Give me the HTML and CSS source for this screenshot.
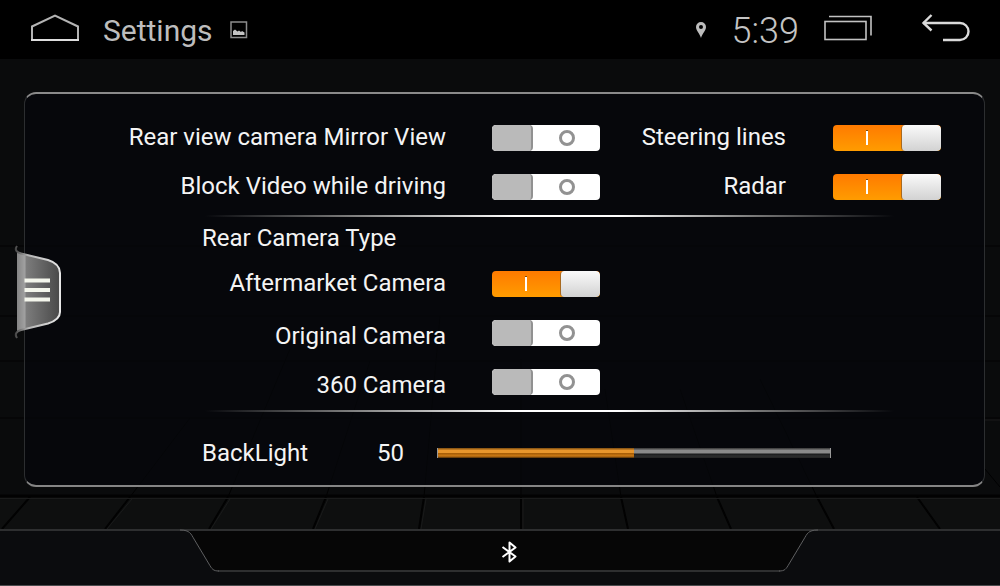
FILE: index.html
```html
<!DOCTYPE html>
<html lang="en">
<head>
  <meta charset="utf-8">
  <title>Settings</title>
  <link rel="stylesheet" href="styles.css">
</head>
<body>
  <header class="status-bar">
    <button class="icon-btn home" aria-label="Home">
      <svg width="50" height="30" viewBox="0 0 50 30" fill="none" stroke="#b4b4b4" stroke-width="2">
        <path d="M2 13.5 L25 2.5 L48 13.5 V27 H2 Z"/>
        <path d="M1 27 H49" stroke="#dedede"/>
      </svg>
    </button>
    <h1>Settings</h1>
    <svg class="picture" width="18" height="18" viewBox="0 0 18 18">
      <rect x="1" y="1" width="15.5" height="15.5" fill="none" stroke="#8c8c8c" stroke-width="1.5"/>
      <path d="M3 14 V10 L5 8.5 L7.5 10.5 L9 9.5 L11 11 L12 10 L14.5 11.5 V14 Z" fill="#c4c4c4"/>
    </svg>
    <div class="spacer"></div>
    <svg class="pin" width="12" height="18" viewBox="0 0 12 18">
      <path fill="#bcbcbc" fill-rule="evenodd" d="M6 1 a5 5 0 0 1 5 5 C11 9.500 7.500 12 6 17 C4.500 12 1 9.500 1 6 A5 5 0 0 1 6 1 Z M6 4 a2 2 0 1 0 0 4 a2 2 0 1 0 0 -4 Z"/>
    </svg>
    <time>5:39</time>
    <button class="icon-btn recent" aria-label="Recent apps">
      <svg width="50" height="28" viewBox="0 0 50 28" fill="none" stroke="#c2c2c2" stroke-width="1.600">
        <rect x="2" y="7.500" width="41" height="18"/>
        <path d="M6 2.500 H48 V21.500"/>
      </svg>
    </button>
    <button class="icon-btn back" aria-label="Back">
      <svg width="50" height="30" viewBox="0 0 50 30" fill="none" stroke="#dadada" stroke-width="2.400">
        <path d="M2 10 H39 a8.500 8.500 0 0 1 0 17 H22"/>
        <path d="M10.500 2 L2.500 10 L10.500 17.500"/>
      </svg>
    </button>
  </header>

  <main>
    <svg class="floor" viewBox="0 0 1000 470" preserveAspectRatio="none" fill="none">
      <path fill="#0e0f0f" d="M0 438 H1000 V470 H0 Z"/>
      <g stroke="#020202" stroke-width="3">
        <path d="M0 437 H1000"/>
        <path d="M0 359 H1000 M0 302 H1000 M0 257 H1000 M0 187 H1000" stroke-width="1"/>
        <path d="M30 438 L2 470 M130 438 L105 470 M228 438 L209 470 M326 438 L313 470 M424 438 L419 470 M521 438 V470 M621 438 L628 470 M717 438 L731 470 M817 438 L834 470 M917 438 L940 470" stroke-width="2"/>
        <path d="M130 438 L190 359 M228 438 L290 290 M326 438 L370 302 M424 438 L440 257 M521 438 V300 M621 438 L605 330 M717 438 L680 330 M817 438 L760 320 M985 410 L1000 428" stroke-width="1"/>
      </g>
      <path stroke="#1a1b1b" d="M0 439.500 H1000 M132 440 L107 470 M230 440 L211 470 M328 440 L315 470 M426 440 L421 470 M523 440 V470 M985 361 H1000"/>
    </svg>

    <form class="panel">
      <div class="row">
        <label for="mirror">Rear view camera Mirror View</label>
        <input type="checkbox" class="toggle" id="mirror">
        <label for="lines">Steering lines</label>
        <input type="checkbox" class="toggle" id="lines" checked>
      </div>
      <div class="row">
        <label for="block">Block Video while driving</label>
        <input type="checkbox" class="toggle" id="block">
        <label for="radar">Radar</label>
        <input type="checkbox" class="toggle" id="radar" checked>
      </div>
      <hr>
      <h2>Rear Camera Type</h2>
      <div class="row">
        <label for="aftermarket">Aftermarket Camera</label>
        <input type="checkbox" class="toggle" id="aftermarket" checked>
      </div>
      <div class="row low">
        <label for="original">Original Camera</label>
        <input type="checkbox" class="toggle" id="original">
      </div>
      <div class="row low">
        <label for="cam360">360 Camera</label>
        <input type="checkbox" class="toggle" id="cam360">
      </div>
      <hr>
      <div class="backlight">
        <label for="light">BackLight</label>
        <output for="light">50</output>
        <input type="range" id="light" min="0" max="100" value="50">
      </div>
    </form>

    <button class="drawer" aria-label="Menu">
      <svg width="48" height="96" viewBox="0 0 48 96" fill="none">
        <defs>
          <linearGradient id="metal">
            <stop offset="0" stop-color="#858585"/>
            <stop offset="0.180" stop-color="#a0a0a0"/>
            <stop offset="0.220" stop-color="#7c7c7c"/>
            <stop offset="1" stop-color="#484848"/>
          </linearGradient>
          <linearGradient id="edge" gradientUnits="userSpaceOnUse" x1="0" y1="0" x2="47" y2="0">
            <stop offset="0" stop-color="#3a3a3a"/>
            <stop offset="0.300" stop-color="#b5b5b5"/>
            <stop offset="1" stop-color="#e8e8e8"/>
          </linearGradient>
        </defs>
        <path fill="url(#metal)" d="M3 7 L34 15 C42 17.500 46 21 46 28 V67 C46 73 42 76 34 78.500 L3 86 Z"/>
        <path stroke="url(#edge)" stroke-width="2" d="M3 1 C0 5 3 7.500 7 8.500 L34 15 C42 17.500 46 21 46 28 V67 C46 73 42 76 34 78.500 L7 85 C3 86 0 89 3 93"/>
        <path stroke="#f4f6ec" stroke-width="4" d="M10.500 35.500 H36 M10.500 45 H36 M10.500 54.500 H36"/>
      </svg>
    </button>
  </main>

  <footer class="dock">
    <svg class="dock-shape" viewBox="0 0 1000 57" preserveAspectRatio="none" fill="none">
      <path fill="#060606" d="M182 1 C190 1 191 6 194 10 L209 35 C212 40 213 42 219 42 H779 C785 42 786 40 789 35 L804 10 C807 6 808 1 816 1 Z"/>
      <path stroke="#2e2f30" stroke-width="2" d="M0 1 H1000 M218 42 H780"/>
      <path stroke="#5e5f60" stroke-width="1" d="M180 1 C190 1 191 5 194 10 L209 35 C212 40 213 42 219 42 M779 42 C785 42 786 40 789 35 L804 10 C807 5 808 1 818 1"/>
      <path stroke="#4b4c4e" d="M0 56.500 H1000"/>
    </svg>
    <svg class="bluetooth" width="16" height="22" viewBox="0 0 16 22" fill="none" stroke="#fff" stroke-width="2" stroke-linejoin="round">
      <path d="M1.500 6 L14.500 15.500 L8.500 20.500 V1.500 L14.500 6.500 L1.500 16"/>
    </svg>
  </footer>
</body>
</html>
```

FILE: styles.css
```css
*, *::before, *::after {
  box-sizing: border-box;
}
body {
  margin: 0;
  min-height: 100vh;
  display: flex;
  flex-direction: column;
  background: #0a0b0c;
  color: #f4f4f4;
  font-family: Roboto, sans-serif;
  font-size: 24px;
}
h1, h2 {
  margin: 0;
  font-weight: 400;
}
button {
  padding: 0;
  border: none;
  background: none;
  cursor: pointer;
}
svg {
  display: block;
}

/* top bar */
.status-bar {
  display: flex;
  align-items: center;
  height: 59px;
  padding: 0 29px 0 30px;
  background: #000;
}
.status-bar h1 {
  margin: 2px 17px 0 23px;
  font-size: 30px;
  color: #bdbdbd;
}
.spacer {
  flex: 1;
}
time {
  margin: 2px 24px 0 25px;
  font-size: 36px;
  font-weight: 300;
  color: #c4c4c4;
}
.back {
  margin-left: 48px;
}
.icon-btn {
  padding-bottom: 4px;
}

/* settings panel */
main {
  position: relative;
  flex: 1;
  padding: 33px 15px 42px 24px;
}
.floor {
  position: absolute;
  top: 0;
  left: 0;
  width: 100%;
  height: 100%;
}
.panel {
  position: relative;
  padding-top: 19px;
  border: 1px solid #2c2e30;
  border-top: 2px solid #8a8a8a;
  border-bottom: 2px solid #858585;
  border-radius: 12px;
  background: rgba(5, 7, 11, 0.75);
}
.row {
  display: grid;
  grid-template-columns: 421fr 154px 186fr 155px 43px;
  align-items: center;
  height: 49px;
}
.row label {
  justify-self: end;
  padding-bottom: 2px;
  white-space: nowrap;
}
.low label {
  padding: 6px 0 0;
}
h2 {
  padding-left: 177px;
  font-size: 24px;
  line-height: 42px;
}
hr {
  height: 2px;
  margin: 4px 90px 0 180px;
  border: none;
  background: linear-gradient(90deg, transparent, #777 20%, #fff 45%, #fff 60%, #777 80%, transparent);
}

/* on/off switches */
.toggle {
  appearance: none;
  display: flex;
  justify-self: end;
  width: 108px;
  height: 26px;
  margin: 0;
  border-radius: 4px;
  background: #fff;
  overflow: hidden;
  cursor: pointer;
}
.toggle::before {
  content: "";
  width: 41px;
  border-right: 2px solid #919191;
  border-radius: 4px;
  background: #bababa;
}
.toggle::after {
  content: "";
  width: 16px;
  height: 16px;
  margin: auto;
  border: 3px solid #929292;
  border-radius: 50%;
}
.toggle:checked {
  flex-direction: row-reverse;
  background: linear-gradient(#ff7a00, #ff9c00);
}
.toggle:checked::before {
  width: 40px;
  border-right: none;
  border-left: 1px solid #a86a20;
  background: linear-gradient(#fafafa, #d2d2d2);
}
.toggle:checked::after {
  width: 2px;
  height: 15px;
  border: none;
  border-top: 1px solid #7d4a10;
  border-radius: 0;
  background: #fff;
}

.backlight {
  display: flex;
  align-items: center;
  height: 64px;
  margin-top: 9px;
  padding: 0 153px 0 177px;
}
.backlight output {
  margin: 0 33px 0 69px;
}
#light {
  appearance: none;
  flex: 1;
  min-width: 0;
  height: 10px;
  margin: 0;
  border: solid #999;
  border-width: 0 1px;
  background:
    linear-gradient(#7a4a10, #e8962c 25%, #e8962c 45%, #a85f08 55%, #cc7a14 80%, #4d2d08) 0 0 / 50% 100% no-repeat,
    linear-gradient(#333, #8a8a8a 25%, #8a8a8a 50%, #191a1b 60%, #2c2d2e 80%, #222);
}
#light::-webkit-slider-thumb {
  appearance: none;
  width: 10px;
  height: 10px;
  background: transparent;
}

/* side drawer handle */
.drawer {
  position: absolute;
  top: 186px;
  left: 14px;
}

/* bottom dock */
.dock {
  position: relative;
  display: flex;
  justify-content: center;
  height: 57px;
  padding: 12px 0 0 17px;
  background: #0b0c0e;
}
.dock-shape {
  position: absolute;
  top: 0;
  left: 0;
  width: 100%;
  height: 100%;
}
.bluetooth {
  position: relative;
}
```
